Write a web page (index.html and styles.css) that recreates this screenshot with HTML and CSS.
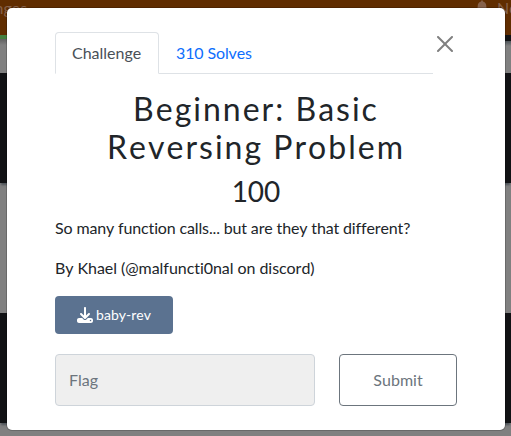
FILE: index.html
```html
<!DOCTYPE html>
<html lang="en">
<head>
<meta charset="utf-8">
<title>Challenges</title>
<link rel="stylesheet" href="styles.css">
</head>
<body>
<div class="page">
  <header class="navbar">
    <span class="nav-link">Challenges</span>
    <span class="nav-link notifications">
      <svg class="bell" viewBox="0 0 448 512"><path d="M224 0c-18 0-32 14-32 32v20C119 66 64 130 64 208v19c0 47-17 92-48 127l-8 9c-8 9-10 23-5 34s16 19 29 19h384c13 0 24-7 29-18s3-25-5-34l-8-10c-31-35-48-80-48-127v-19c0-78-55-142-128-156V32c0-18-14-32-32-32zm45 493c12-12 19-28 19-45H160c0 17 7 33 19 45s28 19 45 19 33-7 45-19z"/></svg>
      Notifications
    </span>
  </header>
  <div class="stripe"><i class="stripe-start"></i><i class="stripe-end"></i></div>
  <div class="tile"></div>
  <div class="tile"></div>
</div>
<main class="modal">
  <div class="modal-head">
    <nav class="tabs">
      <a class="tab active">Challenge</a>
      <a class="tab solves">310 Solves</a>
    </nav>
    <svg class="close" viewBox="0 0 16 16"><path d="M.293.293a1 1 0 0 1 1.414 0L8 6.586 14.293.293a1 1 0 1 1 1.414 1.414L9.414 8l6.293 6.293a1 1 0 0 1-1.414 1.414L8 9.414l-6.293 6.293a1 1 0 0 1-1.414-1.414L6.586 8 .293 1.707a1 1 0 0 1 0-1.414z"/></svg>
  </div>
  <h2 class="name">Beginner: Basic Reversing Problem</h2>
  <h3 class="value">100</h3>
  <div class="description">
    <p class="summary">So many function calls... but are they that different?</p>
    <p class="author">By Khael (@malfuncti0nal on discord)</p>
  </div>
  <a class="file">
    <svg class="download" viewBox="0 0 512 512"><path d="M288 32c0-17.700-14.300-32-32-32s-32 14.300-32 32v242.700l-73.400-73.400c-12.500-12.500-32.800-12.500-45.300 0s-12.500 32.800 0 45.300l128 128c12.500 12.500 32.800 12.500 45.300 0l128-128c12.500-12.500 12.500-32.800 0-45.300s-32.800-12.500-45.300 0L288 274.700V32zM64 352c-35.300 0-64 28.700-64 64v32c0 35.300 28.700 64 64 64h384c35.300 0 64-28.700 64-64v-32c0-35.300-28.700-64-64-64H346.500l-45.300 45.300c-25 25-65.500 25-90.500 0L165.500 352H64zm368 56a24 24 0 1 1 0 48 24 24 0 1 1 0-48z"/></svg>
    <span>baby-rev</span>
  </a>
  <form class="submit-row">
    <input class="flag" type="text" placeholder="Flag">
    <button class="submit" type="button">Submit</button>
  </form>
</main>
</body>
</html>
```
FILE: styles.css
```css
* { box-sizing: border-box; }
html, body { height: 100%; }
body {
  margin: 0;
  overflow: hidden;
  background: #808080;
  color: #212529;
  font: 16px/24px Lato, "Liberation Sans", sans-serif;
  font-kerning: none;
  font-variant-ligatures: none;
}
.page { position: absolute; inset: 0; overflow: hidden; }
.navbar {
  display: flex;
  justify-content: space-between;
  height: 35px;
  background: #602d00;
  color: #86614a;
}
.nav-link { margin: -4px 0 0 -49px; white-space: nowrap; }
.notifications { display: flex; width: 35px; margin: -4px 0 0; gap: 9px; }
.bell { flex: none; width: 12px; height: 14px; margin-top: 4px; fill: currentColor; }
.stripe { display: flex; height: 38px; }
.stripe i { flex: 1; }
.stripe-start { background: linear-gradient(#45803f 4px, #606060 4px, #808080 10px); }
.stripe-end { background: linear-gradient(#111214 6px, #4d5358 6px, #808080 11px); }
.tile {
  height: 110px;
  margin-bottom: 130px;
  background: #111214;
  box-shadow: 0 3px 2px -1px #4d5358;
}
.modal {
  position: absolute;
  left: 7px;
  top: 8px;
  width: 498px;
  height: 422px;
  padding: 24px 48px;
  border-radius: 5px;
  background: #fff;
  box-shadow: 0 0 0 1px rgba(0, 0, 0, .18);
}
.modal-head { display: flex; height: 42px; }
.tabs { display: flex; width: 378px; border-bottom: 1px solid #dee2e6; }
.tab {
  height: 42px;
  padding: 8px 16px;
  border: 1px solid transparent;
  border-radius: 4px 4px 0 0;
  color: #0d6efd;
}
.tab.active { width: 104px; border-color: #dee2e6 #dee2e6 #fff; background: #fff; color: #495057; }
.solves { letter-spacing: -.12px; }
.close { width: 16px; height: 16px; margin: 4px 0 0 4px; fill: #808080; }
.name {
  margin: 16px 0 8px;
  font-size: 32px;
  font-weight: 400;
  line-height: 38.4px;
  letter-spacing: 2px;
  text-align: center;
}
.value { margin: 0 0 8px; font-size: 28px; font-weight: 400; line-height: 33.6px; text-align: center; }
.description p { margin: 0 0 16px; }
.summary { letter-spacing: -.145px; }
.author { letter-spacing: -.05px; }
.file {
  display: flex;
  align-items: center;
  justify-content: center;
  gap: 3px;
  width: 118px;
  height: 38px;
  border-radius: 4px;
  background: #5b7290;
  color: #fff;
  font-size: 14px;
}
.download { width: 16px; height: 16px; fill: currentColor; }
.submit-row { display: flex; gap: 24px; margin: 20px 0 0; }
.flag, .submit { height: 52px; border-radius: 4px; font: inherit; }
.flag { width: 260px; padding: 0 13px 2px; border: 1px solid #ced4da; background: #efefef; }
.flag::placeholder { color: #6c757d; opacity: 1; }
.submit { width: 118px; padding: 0; border: 1px solid #6c757d; background: #fff; color: #6c757d; }
```
